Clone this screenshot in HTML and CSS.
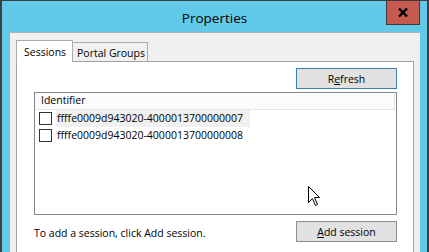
FILE: index.html
```html
<!DOCTYPE html>
<html>
<head>
<meta charset="utf-8">
<link rel="stylesheet" href="styles.css">
</head>
<body>
<div class="window">
  <div class="titlebar">
    <span class="spacer"></span>
    <div class="title">Properties</div>
    <div class="close-wrap">
      <div class="close">
        <svg width="10" height="9" viewBox="0 0 10 9"><path d="M1 0.5 L9 8.5 M9 0.5 L1 8.5" stroke="#000" stroke-width="2.4" fill="none"/></svg>
      </div>
    </div>
  </div>
  <div class="client">
    <div class="tabs">
      <div class="tab active">Sessions</div>
      <div class="tab">Portal Groups</div>
    </div>
    <div class="panel">
      <div class="toolbar">
        <button class="btn default">R<u>e</u>fresh</button>
      </div>
      <div class="list">
        <div class="list-header">Identifier</div>
        <div class="row focused"><span class="cb"></span><span class="label">ffffe0009d943020-4000013700000007</span></div>
        <div class="row"><span class="cb"></span><span class="label">ffffe0009d943020-4000013700000008</span></div>
        <svg class="cursor" width="13" height="21" viewBox="0 0 13 21"><path d="M0.5 0.5 V16.5 L4.5 12.5 L7.5 19.5 L9.5 18.5 L6.5 11.5 H11.5 Z" fill="#fff" stroke="#000" stroke-width="1" stroke-linejoin="miter"/></svg>
      </div>
      <div class="footer">
        <span class="hint">To add a session, click Add session.</span>
        <button class="btn"><u>A</u>dd session</button>
      </div>
    </div>
  </div>
</div>
</body>
</html>
```
FILE: styles.css
```css
html, body {
  margin: 0;
  padding: 0;
  overflow: hidden;
  background: #62c9ea;
}
body {
  width: 429px;
  height: 252px;
  font-family: "Open Sans", "Noto Sans", sans-serif;
  font-size: 10.5px;
  color: #000;
}
.window {
  box-sizing: border-box;
  width: 429px;
  height: 252px;
  background: #63c9e9;
  border-top: 1px solid #3e3e3e;
  border-left: 2px solid #3e3e3e;
  border-right: 2px solid #3e3e3e;
  display: flex;
  flex-direction: column;
}
.titlebar {
  height: 31px;
  display: grid;
  grid-template-columns: 1fr auto 1fr;
}
.title {
  font-size: 13.5px;
  line-height: 16px;
  padding-top: 9px;
  color: #000;
}
.close-wrap {
  display: flex;
  justify-content: flex-end;
  align-items: flex-start;
  padding-right: 7px;
  margin-top: -1px;
}
.close {
  box-sizing: border-box;
  width: 34px;
  height: 25px;
  background: #c75a50;
  border: 1px solid #3b3b3b;
  display: flex;
  align-items: center;
  justify-content: center;
}
.close svg { display: block; }
.client {
  flex: 1;
  margin: 0 7px 0 8px;
  background: #f0f0f0;
  border-top: 1px solid #a9b6be;
  padding: 7px 6px 0 6px;
  display: flex;
  flex-direction: column;
}
.tabs {
  display: flex;
  align-items: flex-end;
  height: 21px;
}
.tab {
  box-sizing: border-box;
  border: 1px solid #acacac;
  border-bottom: none;
  line-height: 14px;
}
.tab.active {
  width: 57px;
  height: 22px;
  margin-bottom: -1px;
  background: #fff;
  padding: 4px 0 0 7px;
  position: relative;
  z-index: 1;
}
.tab:not(.active) {
  width: 75px;
  height: 19px;
  border-left: none;
  background: #f0f0f0;
  padding: 3px 0 0 4px;
}
.panel {
  flex: 1;
  background: #fff;
  border: 1px solid #a0a0a0;
  border-bottom: none;
  padding: 6px 16px 0 17px;
  display: flex;
  flex-direction: column;
}
.toolbar {
  display: flex;
  justify-content: flex-end;
}
.btn {
  box-sizing: border-box;
  width: 101px;
  height: 21px;
  background: #e1e1e1;
  border: 1px solid #8e8e8e;
  font-family: inherit;
  font-size: 10.5px;
  line-height: 14px;
  padding: 0;
  color: #000;
  margin: 0;
}
.btn.default {
  border-color: #3c7fb1;
}
.btn u { text-underline-offset: 1px; }
.list {
  position: relative;
  box-sizing: border-box;
  margin-top: 3px;
  height: 123px;
  border: 1px solid #828790;
}
.list-header {
  box-sizing: border-box;
  width: calc(100% - 1px);
  height: 17px;
  background: #fbfbfb;
  border: 1px solid #e5e5e5;
  border-top: none;
  border-left: none;
  padding-left: 6px;
  line-height: 15px;
}
.row {
  height: 17px;
  display: flex;
  align-items: center;
}
.cb {
  box-sizing: border-box;
  width: 13px;
  height: 13px;
  border: 1px solid #333;
  background: #fff;
  margin-left: 4px;
}
.label {
  margin-left: 4px;
  padding: 0 7px 0 1px;
  height: 17px;
  line-height: 17px;
}
.row.focused .label {
  background: #f0f0f0;
}
.cursor {
  position: absolute;
  left: 273px;
  top: 93px;
}
.footer {
  margin-top: 6px;
  display: flex;
  justify-content: space-between;
  align-items: center;
}
.hint {
  line-height: 14px;
  padding-top: 2px;
}
```
